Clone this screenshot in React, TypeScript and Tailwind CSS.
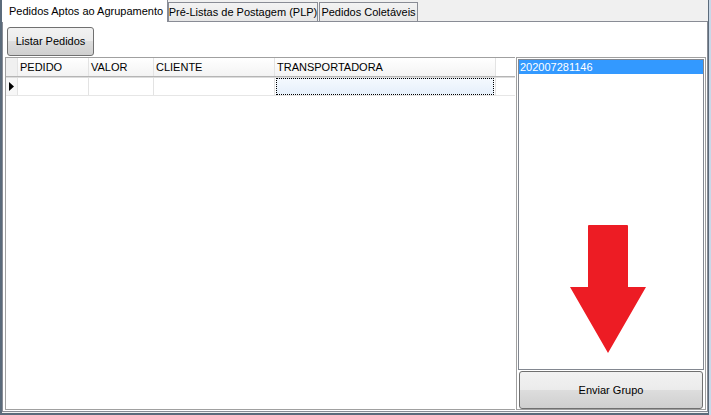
const COLS = [
  { label: 'PEDIDO', w: 'w-[71px]' },
  { label: 'VALOR', w: 'w-[65px]' },
  { label: 'CLIENTE', w: 'w-[121px]' },
  { label: 'TRANSPORTADORA', w: 'w-[221px]' },
]

function WinButton({ children, className }: { children: React.ReactNode; className?: string }) {
  return (
    <button
      type="button"
      className={`flex items-center justify-center rounded-[3px] border border-[#707070] bg-[linear-gradient(#f2f2f2_0%,#ebebeb_50%,#dddddd_50%,#cfcfcf_100%)] text-[#000] ${className ?? ''}`}
    >
      {children}
    </button>
  )
}

function Grid() {
  return (
    <div className="flex flex-col">
      <div className="flex h-[19px] border-b border-[#b5b5b5] bg-white">
        <div className="w-[12px] border-r border-[#e3e3e3] bg-[#f0f0f0]" />
        {COLS.map((c) => (
          <div key={c.label} className={`${c.w} flex items-center border-r border-[#e3e3e3] bg-[linear-gradient(#ffffff,#f3f3f3)] pl-[2px]`}>
            {c.label}
          </div>
        ))}
      </div>
      <div className="flex h-[19px] border-t border-[#dcdcdc] border-b border-b-[#e6e6e6]">
        <div className="flex w-[12px] items-center border-r border-[#e3e3e3] bg-[#f7f7f7] pl-[3px]">
          <svg width="5" height="9" viewBox="0 0 5 9">
            <polygon points="0,0 5,4.5 0,9" fill="#000" />
          </svg>
        </div>
        <div className="w-[71px] border-r border-[#e3e3e3]" />
        <div className="w-[65px] border-r border-[#e3e3e3]" />
        <div className="w-[121px] border-r border-[#e3e3e3]" />
        <div className="w-[221px] border-r border-[#e3e3e3] px-[1px]">
          <div className="h-full border border-dotted border-[#000] bg-[linear-gradient(#f4f9fe,#e6f0fb)]" />
        </div>
      </div>
    </div>
  )
}

export default function App() {
  return (
    <div className="flex h-[415px] w-[711px] bg-[#f0f0f0] text-[11px] text-black font-['Liberation_Sans',Arial,sans-serif]">
      <div className="w-[2px] bg-[#5b6b7b]" />
      <div className="flex w-[706px] flex-col">
        <div className="flex h-[21px] items-end whitespace-nowrap">
          <div className="relative z-10 -mb-px flex h-[22px] w-[166px] items-center border-r border-[#898c95] bg-white pl-[7px]">
            Pedidos Aptos ao Agrupamento
          </div>
          <div className="flex h-[19px] w-[150px] items-center justify-center border border-b-0 border-[#898c95] bg-[linear-gradient(#f3f3f3,#e6e6e6)]">
            Pré-Listas de Postagem (PLP)
          </div>
          <div className="ml-[1px] flex h-[19px] w-[99px] items-center justify-center border border-b-0 border-[#898c95] bg-[linear-gradient(#f3f3f3,#e6e6e6)]">
            Pedidos Coletáveis
          </div>
        </div>
        <div className="flex flex-1 flex-col border border-[#898c95] bg-white pt-[5px] pb-[1px]">
          <WinButton className="ml-[4px] h-[29px] w-[87px]">Listar Pedidos</WinButton>
          <div className="ml-[2px] mr-[1px] mt-[1px] flex min-h-0 flex-1">
            <div className="mr-[1px] flex-1 border-l border-t border-b border-[#a0a0a0]">
              <Grid />
            </div>
            <div className="flex w-[190px] flex-col border border-[#a0a0a0] p-[1px] pb-0">
              <div className="relative flex-1 border border-[#828790] bg-white">
                <div className="h-[14px] bg-[#3399ff] pl-[1px] leading-[14px] text-white">202007281146</div>
                <svg className="absolute left-[51px] top-[165px]" width="76" height="128" viewBox="0 0 76 128">
                  <path d="M19 0 H57 Q58 0 58 1 V62 H76 L38 128 L0 62 H18 V1 Q18 0 19 0 Z" fill="#ed1c24" />
                </svg>
              </div>
              <WinButton className="mx-[1px] mt-[1px] h-[38px]">Enviar Grupo</WinButton>
            </div>
          </div>
        </div>
        <div className="h-[3px] border-b-2 border-[#5b6b7b]" />
      </div>
      <div className="flex w-[3px]">
        <div className="w-[1px] bg-[#5b6b7b]" />
        <div className="flex-1 bg-[#c9d8e8]" />
      </div>
    </div>
  )
}
